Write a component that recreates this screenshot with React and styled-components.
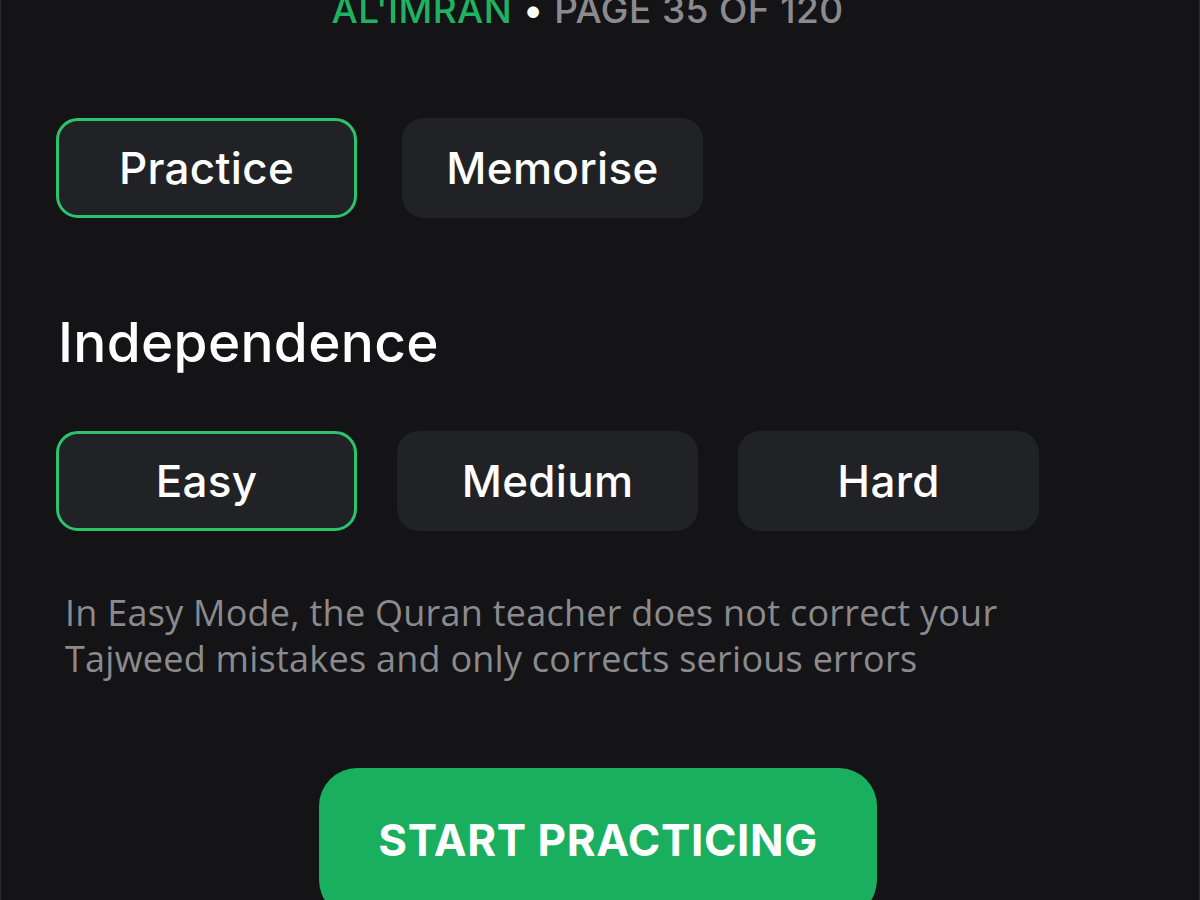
import React, { useState } from "react";
import styled, { createGlobalStyle } from "styled-components";

const Global = createGlobalStyle`
  html, body { margin: 0; padding: 0; background: #141416; }
  body { font-family: Inter, "Noto Sans", sans-serif; color: #fff; }
`;

const Screen = styled.div`
  box-sizing: border-box;
  width: 1200px;
  height: 900px;
  overflow: hidden;
  background: #141416;
  border-left: 1px solid #2b2c30;
  border-right: 1px solid #2b2c30;
  display: flex;
  flex-direction: column;
  padding: 0 55px;
`;

const Subtitle = styled.div`
  margin-top: -10px;
  padding-right: 25px;
  height: 40px;
  line-height: 40px;
  text-align: center;
  font-size: 37px;
  font-weight: 500;
  letter-spacing: 0.4px;
  color: #8b8b8f;
  white-space: nowrap;
`;

const Surah = styled.span`
  color: #1fb262;
`;

const Dot = styled.span`
  color: #fff;
  margin: 0 11px;
`;

const Row = styled.div`
  display: flex;
  gap: ${(p) => p.$gap}px;
  margin-top: ${(p) => p.$top}px;
`;

const Choice = styled.button`
  box-sizing: border-box;
  width: 301px;
  height: 100px;
  border-radius: 22px;
  background: #212226;
  border: 3px solid ${(p) => (p.$active ? "#2bc46c" : "#212226")};
  color: #fff;
  font-family: Inter, "Noto Sans", sans-serif;
  font-size: 44px;
  font-weight: 500;
  letter-spacing: 0.3px;
  display: flex;
  align-items: center;
  justify-content: center;
  padding: 0;
  cursor: pointer;
`;

const Heading = styled.h2`
  margin: 94px 0 0 2px;
  font-size: 55px;
  font-weight: 500;
  line-height: 60px;
  letter-spacing: 0.3px;
  color: #fff;
`;

const Description = styled.p`
  margin: 59px 0 0 9px;
  max-width: 1040px;
  font-family: "Open Sans", "Noto Sans", sans-serif;
  font-size: 36px;
  line-height: 46px;
  letter-spacing: 0.25px;
  color: #8b8b8f;
`;

const StartButton = styled.button`
  align-self: center;
  flex-shrink: 0;
  margin: 86px 4px 0 0;
  width: 558px;
  height: 150px;
  border: none;
  border-radius: 38px;
  background: #1aae5f;
  color: #fff;
  font-family: Inter, "Noto Sans", sans-serif;
  font-size: 44px;
  font-weight: 700;
  letter-spacing: 0.6px;
  display: flex;
  justify-content: center;
  align-items: flex-start;
  padding-top: 45px;
  cursor: pointer;
`;

export default function App() {
  const [mode, setMode] = useState("Practice");
  const [level, setLevel] = useState("Easy");
  return (
    <>
      <Global />
      <Screen>
        <Subtitle>
          <Surah>AL'IMRAN</Surah>
          <Dot>•</Dot>
          PAGE 35 OF 120
        </Subtitle>
        <Row $gap={45} $top={88}>
          {["Practice", "Memorise"].map((m) => (
            <Choice key={m} $active={mode === m} onClick={() => setMode(m)}>
              {m}
            </Choice>
          ))}
        </Row>
        <Heading>Independence</Heading>
        <Row $gap={40} $top={59}>
          {["Easy", "Medium", "Hard"].map((l) => (
            <Choice key={l} $active={level === l} onClick={() => setLevel(l)}>
              {l}
            </Choice>
          ))}
        </Row>
        <Description>
          In Easy Mode, the Quran teacher does not correct your Tajweed mistakes
          and only corrects serious errors
        </Description>
        <StartButton>START PRACTICING</StartButton>
      </Screen>
    </>
  );
}
